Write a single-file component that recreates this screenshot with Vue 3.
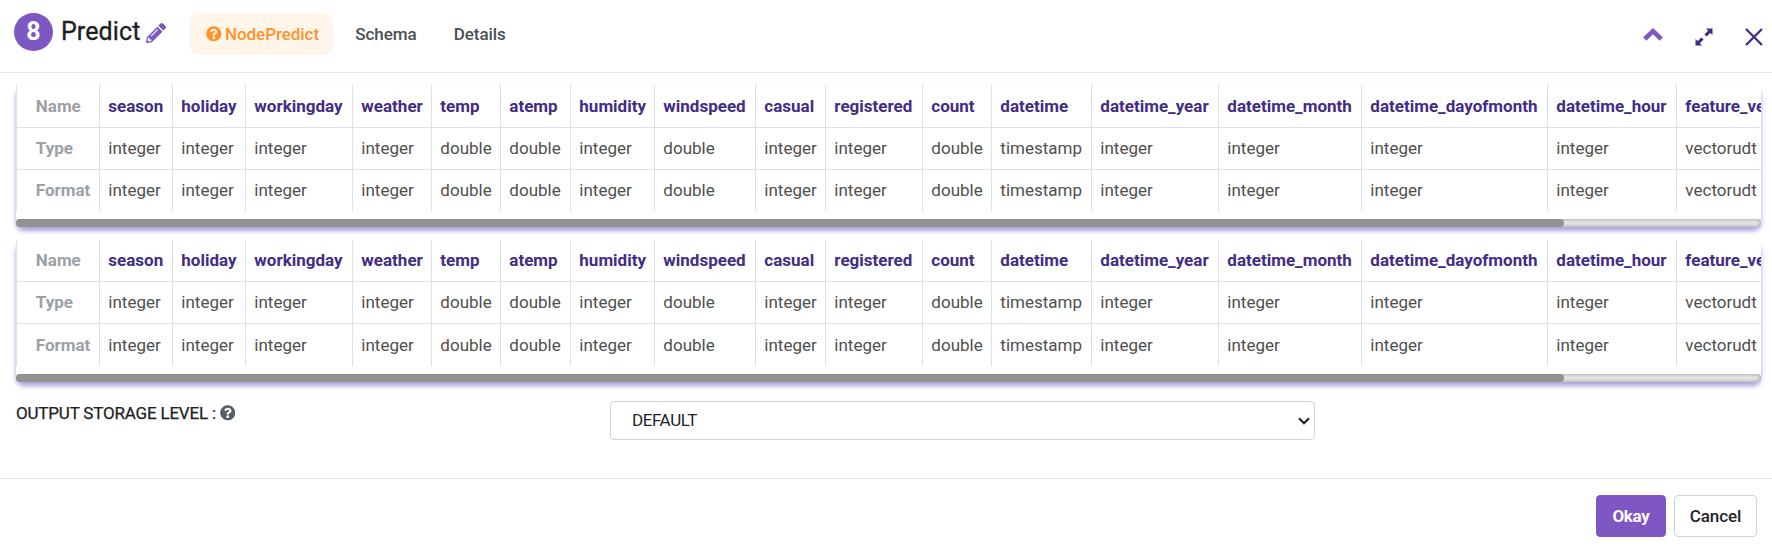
<script setup>
import { ref } from 'vue'

const columns = [
  { name: 'season', type: 'integer', width: 73 },
  { name: 'holiday', type: 'integer', width: 73 },
  { name: 'workingday', type: 'integer', width: 107 },
  { name: 'weather', type: 'integer', width: 79 },
  { name: 'temp', type: 'double', width: 69 },
  { name: 'atemp', type: 'double', width: 70 },
  { name: 'humidity', type: 'integer', width: 84 },
  { name: 'windspeed', type: 'double', width: 101 },
  { name: 'casual', type: 'integer', width: 70 },
  { name: 'registered', type: 'integer', width: 97 },
  { name: 'count', type: 'double', width: 69 },
  { name: 'datetime', type: 'timestamp', width: 100 },
  { name: 'datetime_year', type: 'integer', width: 127 },
  { name: 'datetime_month', type: 'integer', width: 143 },
  { name: 'datetime_dayofmonth', type: 'integer', width: 186 },
  { name: 'datetime_hour', type: 'integer', width: 129 },
  { name: 'feature_vector', type: 'vectorudt', width: 132 },
]
const rows = [
  { label: 'Name', key: 'name' },
  { label: 'Type', key: 'type' },
  { label: 'Format', key: 'type' },
]
const schemas = ['input', 'output']
const storage = ref('DEFAULT')
</script>

<template>
  <div class="dialog">
    <header class="head">
      <span class="badge">8</span>
      <h1 class="title">Predict</h1>
      <svg class="pencil" viewBox="0 0 512 512"><path fill="currentColor" d="M497.900 142.100l-46.100 46.100c-4.700 4.700-12.300 4.700-17 0l-111-111c-4.700-4.700-4.700-12.300 0-17l46.100-46.100c18.700-18.700 49.100-18.700 67.900 0l60.100 60.100c18.800 18.700 18.800 49.100 0 67.900zM284.200 99.800L21.600 362.400.4 483.900c-2.900 16.400 11.400 30.600 27.800 27.800l121.500-21.300 262.600-262.600c4.700-4.700 4.700-12.300 0-17l-111-111c-4.800-4.700-12.400-4.700-17.100 0zM124.100 339.900c-5.500-5.500-5.500-14.300 0-19.800l154-154c5.500-5.500 14.300-5.500 19.800 0s5.500 14.300 0 19.800l-154 154c-5.500 5.500-14.300 5.500-19.800 0zM88 424h48v36.300l-64.500 11.300-31.100-31.100L51.700 376H88v48z" /></svg>
      <nav class="tabs">
        <a class="tab active">
          <svg class="help" viewBox="0 0 512 512"><path fill="currentColor" d="M504 256c0 136.997-111.043 248-248 248S8 392.997 8 256C8 119.083 119.043 8 256 8s248 111.083 248 248zM262.655 90c-54.497 0-89.255 22.957-116.549 63.758-3.536 5.286-2.353 12.415 2.715 16.258l34.699 26.310c5.205 3.947 12.621 3.008 16.665-2.122 17.864-22.658 30.113-35.797 57.303-35.797 20.429 0 45.698 13.148 45.698 32.958 0 14.976-12.363 22.667-32.534 33.976C247.128 238.528 216 254.941 216 296v4c0 6.627 5.373 12 12 12h56c6.627 0 12-5.373 12-12v-1.333c0-28.462 83.186-29.647 83.186-106.667 0-58.002-60.165-102-116.531-102zM256 338c-25.365 0-46 20.635-46 46 0 25.364 20.635 46 46 46s46-20.636 46-46c0-25.365-20.635-46-46-46z" /></svg>
          <span>NodePredict</span>
        </a>
        <a class="tab schema">Schema</a>
        <a class="tab details">Details</a>
      </nav>
      <div class="actions">
        <svg class="chevron" viewBox="0 0 20 13"><path d="M1.800 11L10 3.200L18.200 11" fill="none" stroke="currentColor" stroke-width="4.600" /></svg>
        <svg class="expand" viewBox="0 0 18 18"><path d="M11 0.500H17.500V7L15.300 4.900L11.600 8.600L9.400 6.400L13.100 2.700ZM7 17.500H0.500V11L2.700 13.100L6.400 9.400L8.600 11.600L4.900 15.300Z" fill="currentColor" /></svg>
        <svg class="close" viewBox="0 0 18 18"><path d="M1 1L17 17M17 1L1 17" fill="none" stroke="currentColor" stroke-width="2.300" /></svg>
      </div>
    </header>

    <main class="body">
      <section v-for="schema in schemas" :key="schema" class="panel" :class="schema">
        <div class="viewport">
          <div v-for="row in rows" :key="row.label" class="row">
            <div class="cell label">{{ row.label }}</div>
            <div
              v-for="col in columns"
              :key="col.name"
              class="cell"
              :class="{ name: row.key === 'name' }"
              :style="{ width: col.width + 'px' }"
            >{{ col[row.key] }}</div>
          </div>
        </div>
        <div class="track"><div class="thumb"></div></div>
      </section>

      <div class="field">
        <label class="caption">
          <span>OUTPUT STORAGE LEVEL :</span>
          <svg class="help" viewBox="0 0 512 512"><path fill="currentColor" d="M504 256c0 136.997-111.043 248-248 248S8 392.997 8 256C8 119.083 119.043 8 256 8s248 111.083 248 248zM262.655 90c-54.497 0-89.255 22.957-116.549 63.758-3.536 5.286-2.353 12.415 2.715 16.258l34.699 26.310c5.205 3.947 12.621 3.008 16.665-2.122 17.864-22.658 30.113-35.797 57.303-35.797 20.429 0 45.698 13.148 45.698 32.958 0 14.976-12.363 22.667-32.534 33.976C247.128 238.528 216 254.941 216 296v4c0 6.627 5.373 12 12 12h56c6.627 0 12-5.373 12-12v-1.333c0-28.462 83.186-29.647 83.186-106.667 0-58.002-60.165-102-116.531-102zM256 338c-25.365 0-46 20.635-46 46 0 25.364 20.635 46 46 46s46-20.636 46-46c0-25.365-20.635-46-46-46z" /></svg>
        </label>
        <div class="select">
          <span class="value">{{ storage }}</span>
          <svg class="arrow" viewBox="0 0 12 8"><path d="M1 1.300L6 6.300L11 1.300" fill="none" stroke="currentColor" stroke-width="2.200" /></svg>
        </div>
      </div>
    </main>

    <footer class="foot">
      <button class="btn okay">Okay</button>
      <button class="btn cancel">Cancel</button>
    </footer>
  </div>
</template>

<style>
body {
  margin: 0;
  background: #fff;
}
</style>

<style scoped>
.dialog {
  box-sizing: border-box;
  width: 1772px;
  height: 548px;
  display: flex;
  flex-direction: column;
  overflow: hidden;
  background: #fff;
  color: #212529;
  font-family: Roboto, "Liberation Sans", sans-serif;
  font-size: 17px;
}
.head {
  box-sizing: border-box;
  flex: none;
  height: 73px;
  display: flex;
  align-items: flex-start;
  padding-left: 14px;
  border-bottom: 1px solid #e7e7ea;
}
.badge {
  width: 39px;
  height: 38px;
  margin-top: 13px;
  border-radius: 50%;
  background: #7e57c2;
  color: #fff;
  font-size: 25px;
  font-weight: 700;
  line-height: 38px;
  text-align: center;
}
.title {
  width: 80px;
  margin: 14px 0 0 8px;
  color: #1f1f1f;
  font-size: 25px;
  font-weight: 400;
  letter-spacing: 0.100px;
  line-height: 36px;
  white-space: nowrap;
  -webkit-text-stroke: 0.350px #1f1f1f;
}
.pencil {
  width: 20px;
  height: 20px;
  margin: 23px 0 0 5px;
  color: #7e57c2;
}
.tabs {
  display: flex;
  margin: 13px 0 0 24px;
}
.tab {
  display: flex;
  align-items: center;
  height: 42px;
  color: #495057;
  font-weight: 500;
  letter-spacing: -0.080px;
}
.tab.active {
  box-sizing: border-box;
  width: 143px;
  padding-left: 16px;
  gap: 3.500px;
  border-radius: 9px;
  background: #fff5e8;
  color: #ff922b;
  letter-spacing: -0.060px;
}
.help {
  width: 15.500px;
  height: 15.500px;
  flex: none;
}
.schema {
  width: 98.500px;
  margin-left: 22.300px;
}
.actions {
  display: flex;
  margin: 28px 9px 0 auto;
  color: #432c85;
}
.chevron {
  width: 20px;
  height: 13px;
  color: #7e57c2;
}
.expand {
  width: 18px;
  height: 18px;
  margin-left: 32px;
}
.close {
  width: 18px;
  height: 18px;
  margin-left: 32px;
}
.body {
  flex: 1;
  padding: 12px 11px 0 16px;
}
.panel {
  width: 1745px;
  border-radius: 8px;
  box-shadow: 0 4px 5px #a9a1dc;
}
.output {
  margin-top: 13px;
}
.viewport {
  height: 134px;
  overflow: hidden;
  background: #fff;
}
.row {
  display: flex;
  width: 1804px;
  height: 42px;
}
.row + .row .cell {
  border-top: 1px solid #dee2e6;
  line-height: 40px;
}
.cell {
  box-sizing: border-box;
  flex: none;
  height: 100%;
  padding-left: 8.350px;
  border-left: 1px solid #dcdfe5;
  color: #4f4f4f;
  line-height: 42px;
  white-space: nowrap;
}
.output .row:first-child {
  height: 41px;
}
.output .row:first-child .cell {
  line-height: 40px;
}
.output .row:last-child {
  height: 43px;
}
.output .row:last-child .cell {
  line-height: 42px;
}
.cell.label {
  width: 83px;
  padding-left: 18.800px;
  color: #9ba1a7;
  font-weight: 700;
}
.name {
  color: #432c85;
  font-weight: 700;
}
.track {
  height: 8px;
  border-radius: 4px;
  background: #e8e8e8;
  box-shadow: inset 0 0 4px #909090;
}
.thumb {
  width: 1548px;
  height: 8px;
  border-radius: 4px;
  background: #929292;
}
.field {
  display: flex;
  margin-top: 19px;
}
.caption {
  display: flex;
  align-items: center;
  gap: 4px;
  width: 594px;
  height: 24px;
  color: #212121;
  letter-spacing: -0.190px;
  -webkit-text-stroke: 0.250px #212121;
}
.caption .help {
  color: #565e67;
}
.select {
  box-sizing: border-box;
  display: flex;
  align-items: center;
  justify-content: space-between;
  width: 705px;
  height: 39px;
  padding: 0 4px 0 21px;
  border: 1px solid #ced4da;
  border-radius: 4px;
  color: #212529;
  letter-spacing: -0.400px;
}
.value {
  padding-bottom: 2px;
}
.arrow {
  width: 12px;
  height: 8px;
}
.foot {
  box-sizing: border-box;
  flex: none;
  height: 70px;
  display: flex;
  justify-content: flex-end;
  gap: 8px;
  padding: 16px 15px 0 0;
  border-top: 1px solid #e7e7ea;
}
.btn {
  box-sizing: border-box;
  height: 42px;
  padding: 0;
  border: 1px solid #ced4da;
  border-radius: 4px;
  background: #fff;
  color: #212529;
  font: 500 17px Roboto, "Liberation Sans", sans-serif;
}
.okay {
  width: 70px;
  border-color: #7e57c2;
  background: #7e57c2;
  color: #fff;
  font-weight: 700;
  letter-spacing: -0.300px;
}
.cancel {
  width: 83px;
  letter-spacing: -0.100px;
}
</style>
